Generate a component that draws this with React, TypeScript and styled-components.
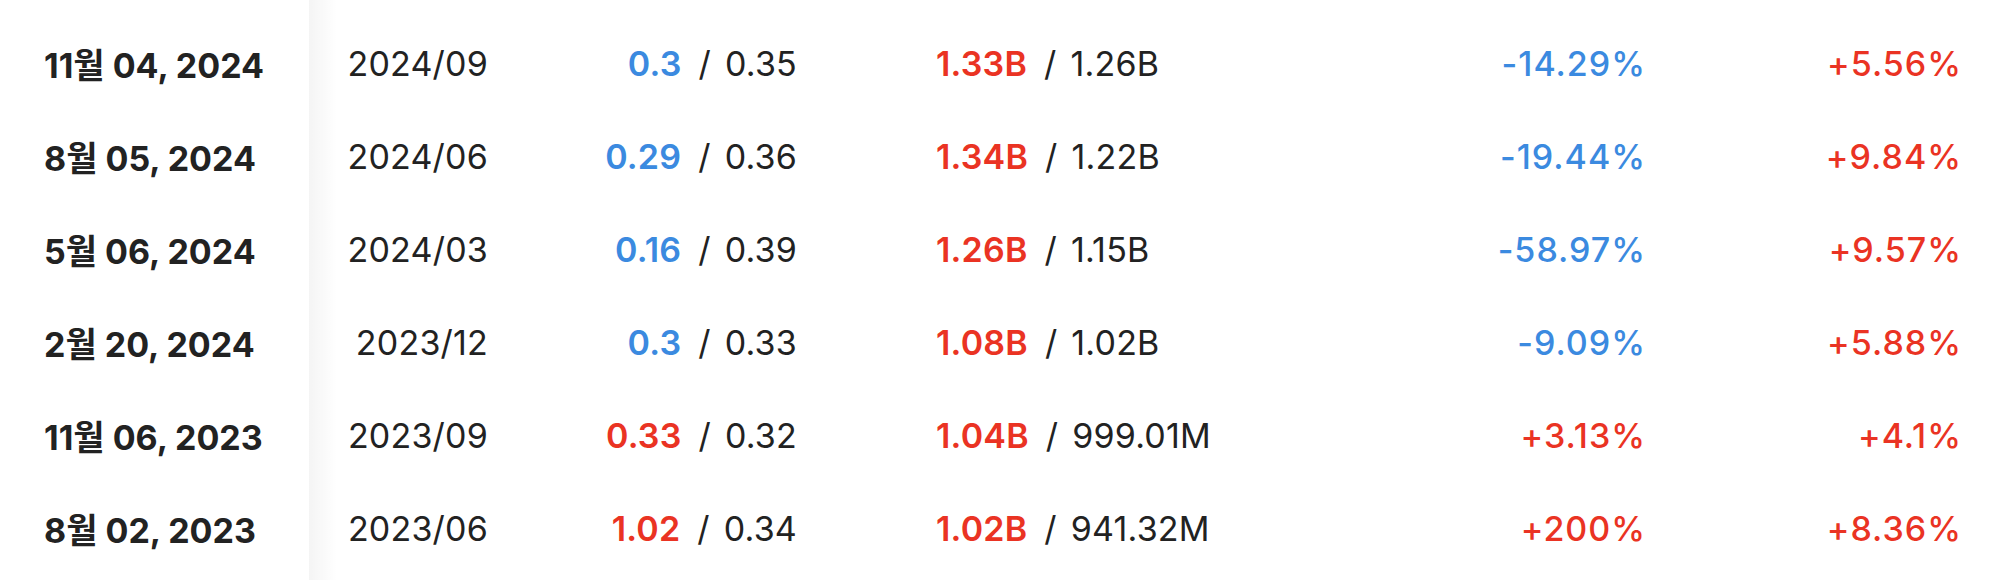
import React from 'react';
import styled, { createGlobalStyle } from 'styled-components';

const GlobalStyle = createGlobalStyle`
  html, body {
    margin: 0;
    padding: 0;
    background: #ffffff;
  }
  body {
    font-family: Inter, "Noto Sans CJK KR", "Noto Sans", sans-serif;
    color: #222222;
  }
`;

interface EarningsRow {
  date: string;
  period: string;
  epsActual: string;
  epsEstimate: string;
  revActual: string;
  revEstimate: string;
  epsSurprise: string;
  revSurprise: string;
}

const rows: EarningsRow[] = [
  { date: '11월 04, 2024', period: '2024/09', epsActual: '0.3', epsEstimate: '0.35', revActual: '1.33B', revEstimate: '1.26B', epsSurprise: '-14.29%', revSurprise: '+5.56%' },
  { date: '8월 05, 2024', period: '2024/06', epsActual: '0.29', epsEstimate: '0.36', revActual: '1.34B', revEstimate: '1.22B', epsSurprise: '-19.44%', revSurprise: '+9.84%' },
  { date: '5월 06, 2024', period: '2024/03', epsActual: '0.16', epsEstimate: '0.39', revActual: '1.26B', revEstimate: '1.15B', epsSurprise: '-58.97%', revSurprise: '+9.57%' },
  { date: '2월 20, 2024', period: '2023/12', epsActual: '0.3', epsEstimate: '0.33', revActual: '1.08B', revEstimate: '1.02B', epsSurprise: '-9.09%', revSurprise: '+5.88%' },
  { date: '11월 06, 2023', period: '2023/09', epsActual: '0.33', epsEstimate: '0.32', revActual: '1.04B', revEstimate: '999.01M', epsSurprise: '+3.13%', revSurprise: '+4.1%' },
  { date: '8월 02, 2023', period: '2023/06', epsActual: '1.02', epsEstimate: '0.34', revActual: '1.02B', revEstimate: '941.32M', epsSurprise: '+200%', revSurprise: '+8.36%' },
];

const UP = '#ea3323';
const DOWN = '#3b8ae0';

const Table = styled.div`
  position: relative;
  width: 1992px;
  height: 580px;
  overflow: hidden;
  padding-top: 17px;
  box-sizing: border-box;
  display: grid;
  grid-template-columns: 309px 179px 309px 503px 346px 316px;
  grid-auto-rows: 93px;
  font-size: 34px;

  &::before {
    content: '';
    position: absolute;
    top: 0;
    bottom: 0;
    left: 309px;
    width: 28px;
    background: linear-gradient(to right, rgba(0, 0, 0, 0.045), rgba(0, 0, 0, 0));
    pointer-events: none;
  }
`;

const Cell = styled.div<{ $align?: 'left' | 'right' }>`
  display: flex;
  align-items: center;
  justify-content: ${p => (p.$align === 'left' ? 'flex-start' : 'flex-end')};
  white-space: nowrap;
  letter-spacing: 0.2px;
`;

const DateCell = styled(Cell)`
  padding-left: 44px;
  font-weight: 700;
  letter-spacing: 0;
  color: #222222;
  background: #ffffff;
`;

const RevCell = styled(Cell)`
  padding-left: 139px;
`;

const Value = styled.span<{ $color?: string; $strong?: boolean }>`
  color: ${p => p.$color || '#222222'};
  font-weight: ${p => (p.$strong ? 600 : 400)};
`;

const Sep = styled.span`
  margin: 0 14px 0 17px;
  color: #222222;
`;

const Percent = styled.span<{ $color: string }>`
  color: ${p => p.$color};
  font-weight: 500;
  letter-spacing: 1px;
`;

const tone = (v: string) => (v.startsWith('-') ? DOWN : UP);

const beat = (actual: string, estimate: string) => {
  const parse = (s: string) => {
    const n = parseFloat(s);
    if (s.endsWith('B')) return n * 1000;
    return n;
  };
  return parse(actual) >= parse(estimate) ? UP : DOWN;
};

const App: React.FC = () => {
  return (
    <>
      <GlobalStyle />
      <Table>
        {rows.map(r => (
          <React.Fragment key={r.date}>
            <DateCell $align="left">{r.date}</DateCell>
            <Cell>{r.period}</Cell>
            <Cell>
              <Value $color={beat(r.epsActual, r.epsEstimate)} $strong>{r.epsActual}</Value>
              <Sep>/</Sep>
              <Value>{r.epsEstimate}</Value>
            </Cell>
            <RevCell $align="left">
              <Value $color={beat(r.revActual, r.revEstimate)} $strong>{r.revActual}</Value>
              <Sep>/</Sep>
              <Value>{r.revEstimate}</Value>
            </RevCell>
            <Cell>
              <Percent $color={tone(r.epsSurprise)}>{r.epsSurprise}</Percent>
            </Cell>
            <Cell>
              <Percent $color={tone(r.revSurprise)}>{r.revSurprise}</Percent>
            </Cell>
          </React.Fragment>
        ))}
      </Table>
    </>
  );
};

export default App;
